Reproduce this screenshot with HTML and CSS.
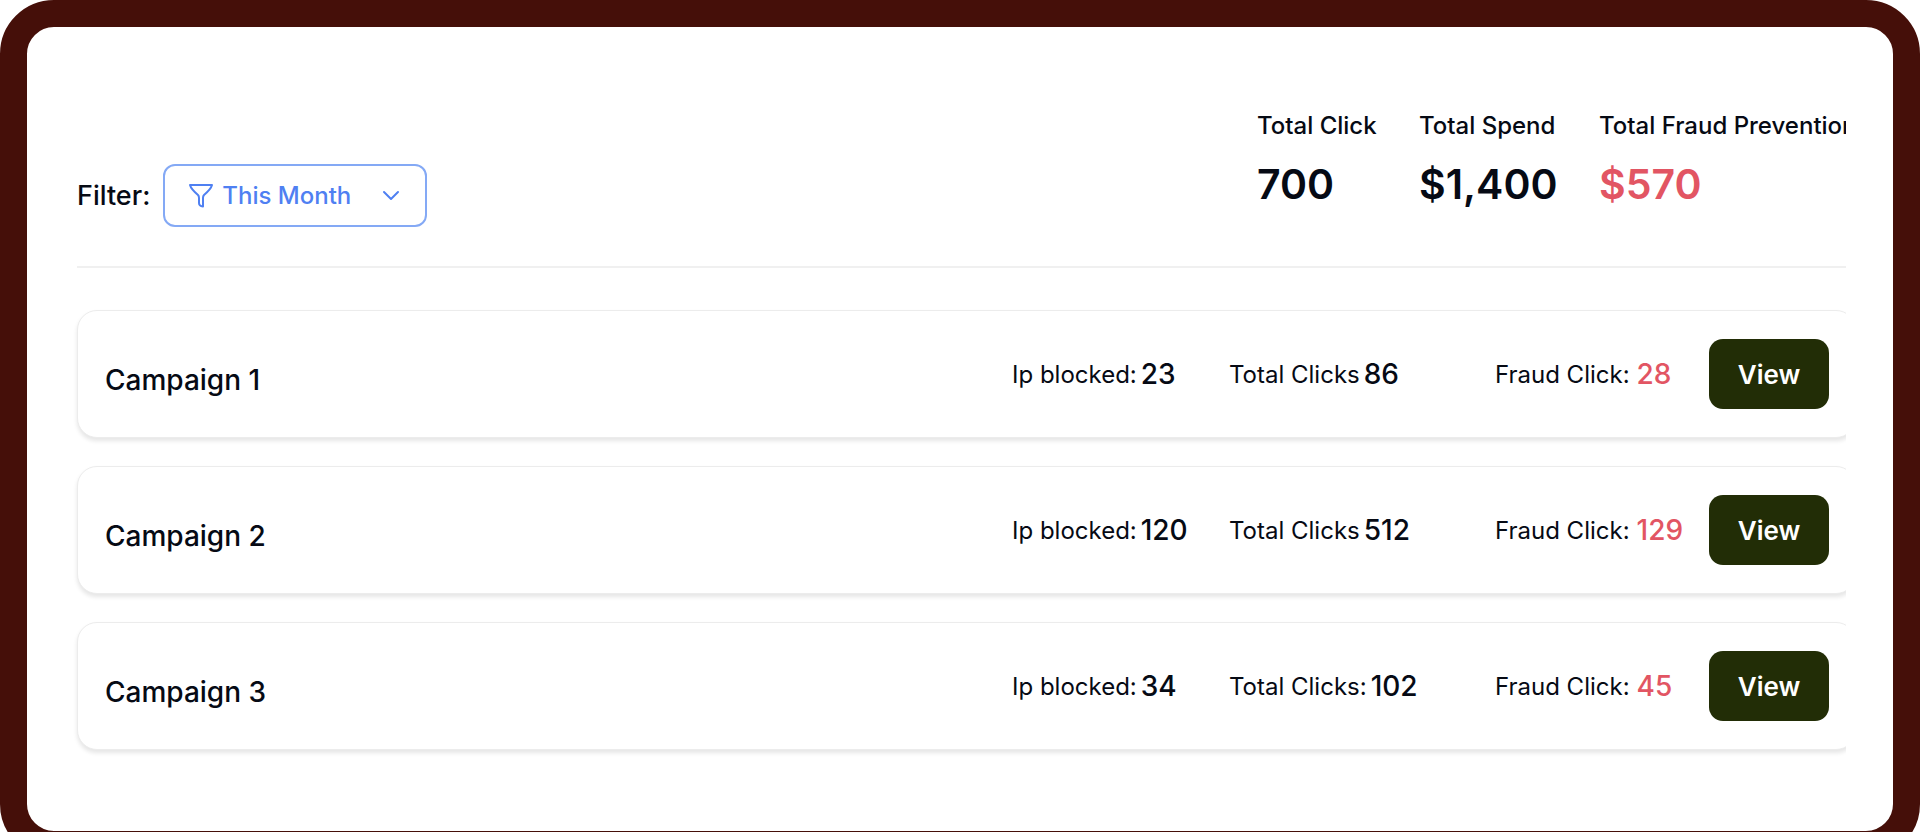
FILE: index.html
```
<!DOCTYPE html>
<html lang="en">
<head>
    <meta charset="UTF-8">
    <meta name="viewport" content="width=device-width, initial-scale=1.0">
    <title>Campaigns</title>
    <link rel="stylesheet" href="styles.css">
</head>
<body>
    <main class="panel">
        <div class="content">
            <header class="top-bar">
                <div class="filter">
                    <label for="period">Filter:</label>
                    <div class="select-box">
                        <select id="period">
                            <option>This Month</option>
                            <option>Last Month</option>
                            <option>This Year</option>
                        </select>
                        <svg class="funnel" viewBox="0 0 26 26" aria-hidden="true">
                            <path d="M2 2H24Q23 6 16 12Q15 13 15 15V23.500Q11 23 11 20V15Q11 13 10 12Q3 6 2 2Z"/>
                        </svg>
                        <svg class="chevron" viewBox="0 0 18 12" aria-hidden="true">
                            <path d="M2 2L9 9L16 2"/>
                        </svg>
                    </div>
                </div>
                <div class="stats">
                    <div class="stat">
                        <p>Total Click</p>
                        <strong>700</strong>
                    </div>
                    <div class="stat">
                        <p>Total Spend</p>
                        <strong>$1,400</strong>
                    </div>
                    <div class="stat">
                        <p>Total Fraud Prevention</p>
                        <strong class="red">$570</strong>
                    </div>
                </div>
            </header>

            <section class="campaigns">
                <article class="card">
                    <h2>Campaign 1</h2>
                    <p class="metric">Ip blocked: <span>23</span></p>
                    <p class="metric">Total Clicks <span>86</span></p>
                    <p class="metric fraud">Fraud Click: <span class="red">28</span></p>
                    <button type="button">View</button>
                </article>
                <article class="card">
                    <h2>Campaign 2</h2>
                    <p class="metric">Ip blocked: <span>120</span></p>
                    <p class="metric">Total Clicks <span>512</span></p>
                    <p class="metric fraud">Fraud Click: <span class="red">129</span></p>
                    <button type="button">View</button>
                </article>
                <article class="card">
                    <h2>Campaign 3</h2>
                    <p class="metric">Ip blocked: <span>34</span></p>
                    <p class="metric">Total Clicks:<span>102</span></p>
                    <p class="metric fraud">Fraud Click: <span class="red">45</span></p>
                    <button type="button">View</button>
                </article>
            </section>
        </div>
    </main>
</body>
</html>
```
FILE: styles.css
```
*{
    margin: 0;
    padding: 0;
    box-sizing: border-box;
    font-family: Inter, "Liberation Sans", sans-serif;
}

body{
    background-color: #fff;
    color: #060a14;
    height: 100vh;
    overflow: hidden;
}

.panel{
    border: 27px solid #450f09;
    border-radius: 54px;
    padding: 83px 47px 81px 40px;
}

.content{
    padding-left: 10px;
    padding-bottom: 10px;
    margin-bottom: -10px;
    overflow: hidden;
}

.top-bar{
    display: flex;
    justify-content: space-between;
    align-items: flex-end;
    padding-bottom: 39px;
    border-bottom: 2px solid #f0f0f0;
    margin-bottom: 42px;
}

.filter{
    display: flex;
    align-items: center;
    gap: 13px;
    font-size: 27px;
    font-weight: 500;
}

.select-box{
    position: relative;
}

select{
    appearance: none;
    display: block;
    width: 264px;
    height: 63px;
    padding: 0 57px;
    background-color: #fff;
    border: 2px solid #84a9f5;
    border-radius: 12px;
    color: #4f80f2;
    font-size: 24px;
    font-weight: 500;
    cursor: pointer;
}

.select-box svg{
    position: absolute;
    top: 50%;
    transform: translateY(-50%);
    fill: none;
    stroke: #4f80f2;
    stroke-width: 2;
    stroke-linecap: round;
    stroke-linejoin: round;
    pointer-events: none;
}

.funnel{
    left: 25px;
    width: 26px;
    height: 26px;
}

.chevron{
    right: 27px;
    width: 18px;
    height: 12px;
}

.stats{
    display: grid;
    grid-template-columns: 162px 180px 247px;
    height: 117px;
    white-space: nowrap;
}

.stat p{
    font-size: 24px;
    line-height: 32px;
    font-weight: 500;
    margin-bottom: 14px;
}

.stat strong{
    display: block;
    font-size: 41px;
    line-height: 56px;
    font-weight: 600;
}

.red,
.stat .red{
    color: #e25563;
}

.campaigns{
    display: grid;
    gap: 28px;
    margin-right: -10px;
}

.card{
    display: grid;
    grid-template-columns: 1fr 217px 266px 214px 120px;
    align-items: center;
    height: 128px;
    padding: 0 26px 0 27px;
    background-color: #fff;
    border: 1px solid #ececec;
    border-radius: 20px;
    box-shadow: 0 3px 4px rgba(0, 0, 0, 0.1);
}

.card h2{
    font-size: 28px;
    font-weight: 500;
    padding-top: 12px;
}

.metric{
    display: flex;
    align-items: center;
    gap: 4px;
    font-size: 24px;
    white-space: nowrap;
}

.fraud{
    gap: 7px;
}

.metric span{
    font-size: 28px;
    font-weight: 500;
}

.card button{
    height: 70px;
    background-color: #222d06;
    color: #fff;
    border: none;
    border-radius: 14px;
    font-size: 26px;
    font-weight: 600;
    cursor: pointer;
}

.card button:hover{
    background-color: #33430a;
}
```
